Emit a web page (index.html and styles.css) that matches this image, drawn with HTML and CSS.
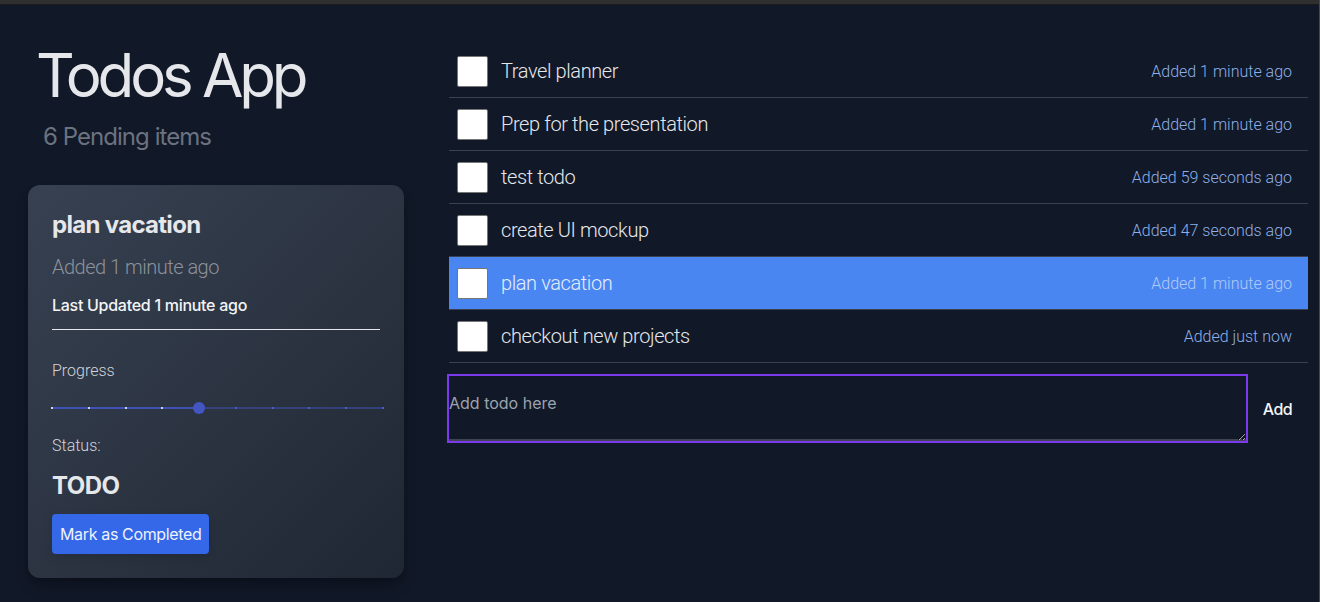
FILE: index.html
```html
<!DOCTYPE html>
<html lang="en">
<head>
<meta charset="utf-8">
<title>Todos App</title>
<link rel="stylesheet" href="styles.css">
</head>
<body>
<div class="window">
  <div class="topbar"></div>
  <main class="app">
    <aside class="sidebar">
      <h1 class="title">Todos App</h1>
      <p class="pending">6 Pending items</p>
      <section class="card">
        <h2 class="card-title">plan vacation</h2>
        <p class="card-added">Added 1 minute ago</p>
        <p class="card-updated">Last Updated 1 minute ago</p>
        <hr class="card-rule">
        <p class="label label-progress">Progress</p>
        <div class="slider">
          <div class="rail"></div>
          <div class="track" style="width:44.444%"></div>
          <span class="mark on" style="left:0%"></span>
          <span class="mark on" style="left:11.111%"></span>
          <span class="mark on" style="left:22.222%"></span>
          <span class="mark on" style="left:33.333%"></span>
          <span class="mark" style="left:55.555%"></span>
          <span class="mark" style="left:66.666%"></span>
          <span class="mark" style="left:77.777%"></span>
          <span class="mark" style="left:88.888%"></span>
          <span class="mark" style="left:100%"></span>
          <span class="thumb" style="left:44.444%"></span>
        </div>
        <p class="label label-status">Status:</p>
        <p class="status">TODO</p>
        <button class="complete-btn" type="button">Mark as Completed</button>
      </section>
    </aside>
    <section class="content">
      <ul class="todo-list">
        <li class="todo"><input class="check" type="checkbox"><span class="todo-text">Travel planner</span><span class="todo-time">Added 1 minute ago</span></li>
        <li class="todo"><input class="check" type="checkbox"><span class="todo-text">Prep for the presentation</span><span class="todo-time">Added 1 minute ago</span></li>
        <li class="todo"><input class="check" type="checkbox"><span class="todo-text">test todo</span><span class="todo-time">Added 59 seconds ago</span></li>
        <li class="todo"><input class="check" type="checkbox"><span class="todo-text">create UI mockup</span><span class="todo-time">Added 47 seconds ago</span></li>
        <li class="todo selected"><input class="check" type="checkbox"><span class="todo-text">plan vacation</span><span class="todo-time">Added 1 minute ago</span></li>
        <li class="todo"><input class="check" type="checkbox"><span class="todo-text">checkout new projects</span><span class="todo-time">Added just now</span></li>
      </ul>
      <form class="add-form">
        <textarea class="add-input" placeholder="Add todo here"></textarea>
        <button class="add-btn" type="button">Add</button>
      </form>
    </section>
  </main>
</div>
</body>
</html>
```
FILE: styles.css
```css
* { box-sizing: border-box; }

html, body {
  margin: 0;
  padding: 0;
  height: 100%;
  background: #111827;
}

body {
  font-family: "Inter", "Roboto", sans-serif;
  color: #e5e7eb;
  overflow: hidden;
}

.window {
  height: 602px;
  border-right: 1px solid #444851;
  background: #111827;
}

.topbar {
  height: 5px;
  background: #2f2f2f;
  border-bottom: 1px solid #1b1b1b;
}

.app {
  display: flex;
  gap: 43px;
  padding: 40px 11px 0 28px;
}

.sidebar {
  width: 376px;
  flex: none;
}

.title {
  margin: 0;
  padding-left: 8px;
  font-family: "Inter", sans-serif;
  font-weight: 400;
  font-size: 60px;
  line-height: 60px;
  color: #e5e7eb;
  letter-spacing: -4.2px;
}

.pending {
  margin: 16px 0 0;
  padding-left: 15px;
  font-family: "Inter", sans-serif;
  font-size: 24px;
  line-height: 32px;
  color: #6b7280;
  letter-spacing: -0.95px;
}

.card {
  margin-top: 32px;
  padding: 24px;
  border-radius: 12px;
  background: linear-gradient(135deg, #374151 0%, #2a3240 60%, #1f2733 100%);
  box-shadow: 0 10px 15px -3px rgba(0, 0, 0, 0.25), 0 4px 6px -2px rgba(0, 0, 0, 0.15);
}

.card p { margin: 0; }

.card-title {
  margin: 0;
  font-family: "Inter", sans-serif;
  font-weight: 700;
  font-size: 24px;
  line-height: 32px;
  color: #e5e7eb;
  letter-spacing: -0.7px;
}

.card-added {
  margin-top: 12px !important;
  font-family: "Roboto", sans-serif;
  font-weight: 300;
  font-size: 20px;
  line-height: 28px;
  color: #8c929c;
  letter-spacing: -0.5px;
}

.card-updated {
  margin-top: 12px !important;
  font-family: "Inter", sans-serif;
  font-weight: 500;
  font-size: 16px;
  line-height: 24px;
  color: #f3f4f6;
  letter-spacing: -0.28px;
}

.card-rule {
  margin: 12px 0 0;
  border: 0;
  height: 1px;
  background: #e5e7eb;
}

.label {
  font-family: "Roboto", sans-serif;
  font-weight: 300;
  font-size: 16px;
  line-height: 24px;
  color: #d1d5db;
}

.label-progress { margin-top: 29px !important; }
.label-status { margin-top: 14px !important; }

.slider {
  position: relative;
  width: calc(100% + 3px);
  height: 24px;
  margin-top: 13px;
}

.rail, .track {
  position: absolute;
  left: 0;
  top: 11px;
  height: 2px;
  background: #3f51b5;
}

.rail {
  right: 0;
  opacity: 0.5;
}

.mark {
  position: absolute;
  top: 11px;
  width: 2px;
  height: 2px;
  margin-left: -1px;
  background: #4a5cc8;
}

.mark.on {
  background: #cfd5f3;
}

.thumb {
  position: absolute;
  top: 6px;
  width: 12px;
  height: 12px;
  margin-left: -6px;
  border-radius: 50%;
  background: #4355c0;
}

.status {
  margin-top: 12px !important;
  font-family: "Inter", sans-serif;
  font-weight: 700;
  font-size: 24px;
  line-height: 32px;
  color: #e5e7eb;
  letter-spacing: -0.5px;
}

.complete-btn {
  display: block;
  margin-top: 12px;
  height: 40px;
  padding: 0 8px;
  border: 0;
  border-radius: 4px;
  background: #3468e8;
  color: #eef2fc;
  font-family: "Inter", sans-serif;
  font-size: 16px;
  font-weight: 400;
  letter-spacing: -0.35px;
  box-shadow: 0 4px 10px rgba(0, 0, 0, 0.12);
}

.content {
  flex: 1;
  min-width: 0;
}

.todo-list {
  list-style: none;
  margin: 0 0 0 2px;
  padding: 0;
}

.todo {
  display: flex;
  align-items: center;
  height: 53px;
  padding: 0 16px 0 8px;
  border-bottom: 1px solid #3a4150;
}

.check {
  -webkit-appearance: none;
  appearance: none;
  flex: none;
  width: 31px;
  height: 31px;
  margin: 0;
  background: #ffffff;
  border: 1px solid #767676;
  border-radius: 2px;
}

.todo-text {
  margin-left: 13px;
  flex: 1;
  font-family: "Roboto", sans-serif;
  font-weight: 300;
  font-size: 20px;
  color: #e5e7eb;
  letter-spacing: -0.4px;
}

.todo-time {
  font-family: "Roboto", sans-serif;
  font-weight: 300;
  font-size: 16px;
  color: #8fb0e8;
}

.todo.selected {
  background: #4a86f2;
}

.todo.selected .todo-text { color: #e4ecfc; }
.todo.selected .todo-time { color: #b3caf6; }

.add-form {
  display: flex;
  align-items: center;
  margin-top: 11px;
}

.add-input {
  flex: 1;
  height: 69px;
  padding: 15px 0;
  border: 2px solid #7c3aed;
  border-radius: 0;
  background: #111827;
  box-shadow: inset 0 -2px 0 #3f4450;
  color: #e5e7eb;
  font-family: "Inter", sans-serif;
  font-size: 16px;
  line-height: 24px;
  resize: vertical;
  outline: none;
}

.add-input::placeholder {
  color: #9ca3af;
}

.add-btn {
  padding: 0 16px 0 15px;
  border: 0;
  background: transparent;
  color: #f3f4f6;
  font-family: "Inter", sans-serif;
  font-weight: 500;
  font-size: 16px;
  line-height: 24px;
  letter-spacing: -0.6px;
}
```
